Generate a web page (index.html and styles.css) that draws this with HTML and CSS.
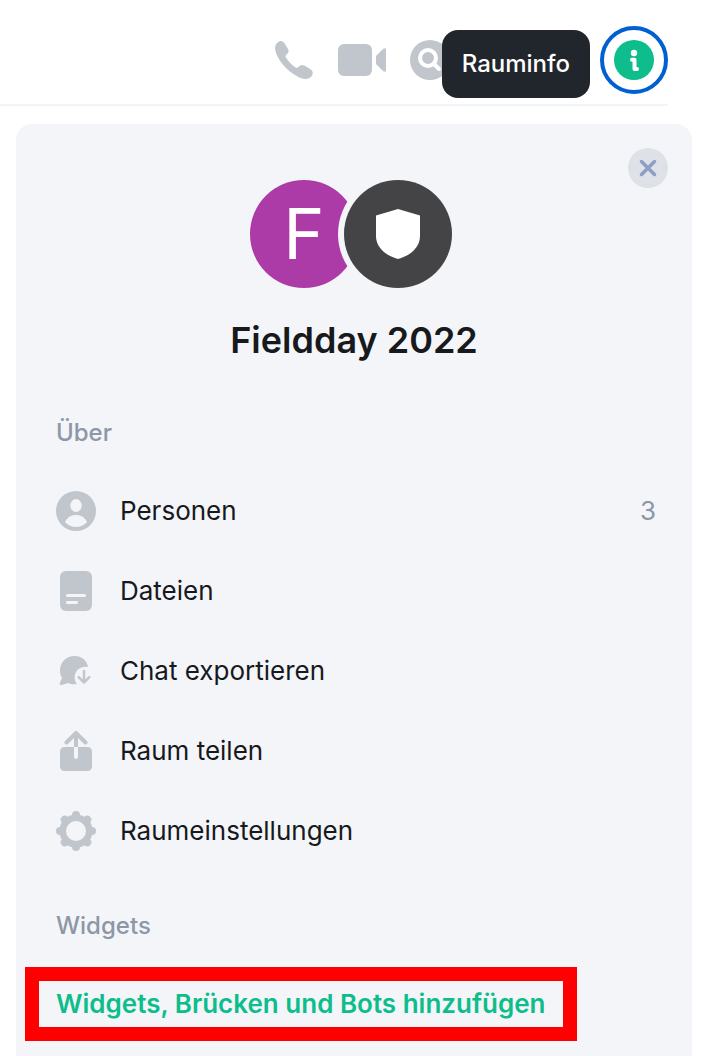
FILE: index.html
```html
<!DOCTYPE html>
<html lang="de">
<head>
<meta charset="utf-8">
<meta name="viewport" content="width=device-width, initial-scale=1">
<title>Rauminfo</title>
<link rel="stylesheet" href="styles.css">
</head>
<body>
<header class="header">
  <div class="tools">
    <button class="tool" aria-label="Sprachanruf">
      <svg width="40" height="40" viewBox="0 0 40 40"><path d="M5 1.500C7.500 .4 9.500 1.500 11 4l3 5c1.400 2.400.6 4-1.400 5.400-1 .8-1.300 1.800-.6 3.200 2.200 4 5.200 7 9.500 9.800 1.300.8 2.300.5 3.200-.6 1.500-1.900 3.400-2.500 5.700-1.200l5.300 3.200c2.700 1.600 3.800 3.700 2.600 6.200-1.200 2.600-4 4-7 4-4 0-8-2.200-13-5.700C11 28 6.500 22.500 3 15.500.2 9.500.4 3.500 5 1.500z"/></svg>
    </button>
    <button class="tool" aria-label="Videoanruf">
      <svg width="48" height="40" viewBox="0 0 48 40"><rect y="4" width="34" height="32" rx="6"/><path d="M38 16l7-7q3-2 3 1v20q0 3-3 1l-7-7z"/></svg>
    </button>
    <button class="tool" aria-label="Suchen">
      <svg width="40" height="40" viewBox="0 0 40 40"><circle cx="20" cy="20" r="20"/><circle class="cut" cx="18" cy="18" r="8"/><path class="cut" d="M24 24l5 5"/></svg>
    </button>
  </div>
  <div class="info">
    <span class="tooltip" role="tooltip" id="tip">Rauminfo</span>
    <button class="info-button" aria-label="Info" aria-describedby="tip">
      <svg width="40" height="40" viewBox="0 0 40 40"><circle cx="20" cy="20" r="20" fill="#0dbd8b"/><circle cx="20" cy="13" r="3.200" fill="#fff"/><path d="M18 19.800h2.500v9.200h2.500" fill="none" stroke="#fff" stroke-width="4" stroke-linecap="round" stroke-linejoin="round"/></svg>
    </button>
  </div>
</header>
<main class="panel">
  <button class="close" aria-label="Schließen">
    <svg width="40" height="40" viewBox="0 0 40 40"><path d="M13.500 13.500l13 13M26.500 13.500l-13 13" fill="none" stroke="#8d9fc3" stroke-width="3.500" stroke-linecap="round"/></svg>
  </button>
  <div class="avatars">
    <span class="avatar">F</span>
    <span class="avatar shield">
      <svg width="44" height="50" viewBox="0 0 44 50"><path d="M22 0l22 6.500V27c0 11-9 19.500-22 23C9 46.500 0 38 0 27V6.500z" fill="#fff"/></svg>
    </span>
  </div>
  <h1 class="title">Fieldday 2022</h1>
  <section>
    <h2 class="heading">Über</h2>
    <div class="menu">
      <button class="row">
        <svg class="icon" width="40" height="40" viewBox="0 0 40 40"><circle cx="20" cy="20" r="20"/><ellipse class="hole" cx="20" cy="14.500" rx="5.700" ry="6.500"/><path class="hole" d="M9 31c2-4.500 6-7 11-7s9 2.500 11 7c-3 3.300-7 5-11 5s-8-1.700-11-5z"/></svg>
        <span>Personen</span><span class="count">3</span>
      </button>
      <button class="row">
        <svg class="icon" width="40" height="40" viewBox="0 0 40 40"><rect x="4" width="32" height="40" rx="6"/><path class="line" d="M11.500 24.500h17M11.500 31.500h9"/></svg>
        <span>Dateien</span>
      </button>
      <button class="row">
        <svg class="icon" width="40" height="40" viewBox="0 0 40 40"><path d="M18.500 5c7 0 12.500 4.500 13.600 11-8-1-13.500 4-13.500 10.500 0 2.500.8 4.700 2.300 6.500-3.200.6-6.400.2-9-1L6 34c-2 .5-3-.8-2-2.500l2-4.500C4.500 25 4 22 4 19.500 4 11 10.500 5 18.500 5z"/><path d="M28 20v11M22.700 26.200l5.300 5.300 5.300-5.300" fill="none" stroke="#c1c6cd" stroke-width="2.500" stroke-linecap="round" stroke-linejoin="round"/></svg>
        <span>Chat exportieren</span>
      </button>
      <button class="row">
        <svg class="icon" width="40" height="40" viewBox="0 0 40 40"><rect x="4" y="16" width="32" height="24" rx="4.500"/><path class="hole" d="M18 16h4v10a2 2 0 0 1-4 0z"/><path d="M18 4h4v12h-4z"/><path d="M10.500 11.500L20 2l9.500 9.500" fill="none" stroke="#c1c6cd" stroke-width="4" stroke-linecap="round" stroke-linejoin="round"/></svg>
        <span>Raum teilen</span>
      </button>
      <button class="row">
        <svg class="icon" width="40" height="40" viewBox="0 0 40 40"><circle cx="20" cy="20" r="13.300" fill="none" stroke="#c1c6cd" stroke-width="6.600"/><path d="M20 4v1.500M20 34.500v1.500M4 20h1.500M34.500 20h1.500M8.700 8.700l1 1M30.300 30.300l1 1M31.300 8.700l-1 1M9.700 30.300l-1 1" fill="none" stroke="#c1c6cd" stroke-width="8" stroke-linecap="round"/></svg>
        <span>Raumeinstellungen</span>
      </button>
    </div>
  </section>
  <section class="widgets">
    <h2 class="heading">Widgets</h2>
    <div class="marker"><button class="add">Widgets, Brücken und Bots hinzufügen</button></div>
  </section>
</main>
</body>
</html>
```
FILE: styles.css
```css
* { box-sizing: border-box; }
body {
  margin: 0;
  min-height: 100vh;
  display: flex;
  flex-direction: column;
  background: #fff;
  color: #17191c;
  font-family: Inter, "Liberation Sans", sans-serif;
}
button {
  margin: 0;
  padding: 0;
  border: 0;
  background: none;
  color: inherit;
  font: inherit;
  cursor: pointer;
}
svg { display: block; flex: none; }
.header {
  display: flex;
  justify-content: flex-end;
  align-items: center;
  margin-right: 34px;
  padding: 26px 0 10px;
  border-bottom: 2px solid #f3f4f9;
}
.tools { display: flex; gap: 20px; margin-right: 146px; }
.tool { display: flex; justify-content: center; width: 48px; fill: #c1c6cd; }
.cut { fill: none; stroke: #fff; stroke-width: 4; stroke-linecap: round; }
.info { position: relative; }
.info-button {
  display: grid;
  place-items: center;
  width: 68px;
  height: 68px;
  border: 4px solid #005fd1;
  border-radius: 50%;
}
.tooltip {
  position: absolute;
  top: 4px;
  right: 78px;
  padding: 18px 20px;
  border-radius: 16px;
  background: #21262c;
  color: #fff;
  font-size: 24px;
  font-weight: 500;
  line-height: 32px;
}
.panel {
  position: relative;
  flex: 1;
  margin: 18px 10px 0 16px;
  padding: 56px 24px 0 40px;
  border-radius: 16px 16px 0 0;
  background: #f3f5f9;
}
.close {
  position: absolute;
  top: 24px;
  right: 24px;
  border-radius: 50%;
  background: #dee1e7;
}
.avatars { display: flex; justify-content: center; margin-right: 22px; }
.avatar {
  display: grid;
  place-items: center;
  width: 108px;
  height: 108px;
  border-radius: 50%;
  background: #ac3ba8;
  color: #fff;
  font-size: 70px;
  line-height: 108px;
}
.shield {
  margin-left: -14px;
  background: #444446;
  box-shadow: 0 0 0 6px #f3f5f9;
}
.title {
  margin: 28px 16px 0 0;
  font-size: 36px;
  font-weight: 600;
  line-height: 48px;
  text-align: center;
}
.heading {
  margin: 53px 0 0;
  color: #8d97a5;
  font-size: 24px;
  font-weight: 500;
  line-height: 32px;
}
.menu { display: flex; flex-direction: column; margin-top: 22px; }
.row {
  display: flex;
  align-items: center;
  gap: 24px;
  height: 80px;
  padding-right: 12px;
  font-size: 26px;
  line-height: 32px;
  text-align: left;
}
.icon { fill: #c1c6cd; }
.icon .hole { fill: #f3f5f9; }
.icon .line { stroke: #f3f5f9; stroke-width: 3; stroke-linecap: round; }
.count { margin-left: auto; color: #8d97a5; }
.widgets .heading { margin-top: 39px; }
.marker {
  width: fit-content;
  margin: 25px 0 0 -31px;
  padding: 7px 17px;
  border: 14px solid #f00;
}
.add {
  color: #0dbd8b;
  font-size: 26px;
  font-weight: 600;
  line-height: 32px;
  text-align: left;
}
```
